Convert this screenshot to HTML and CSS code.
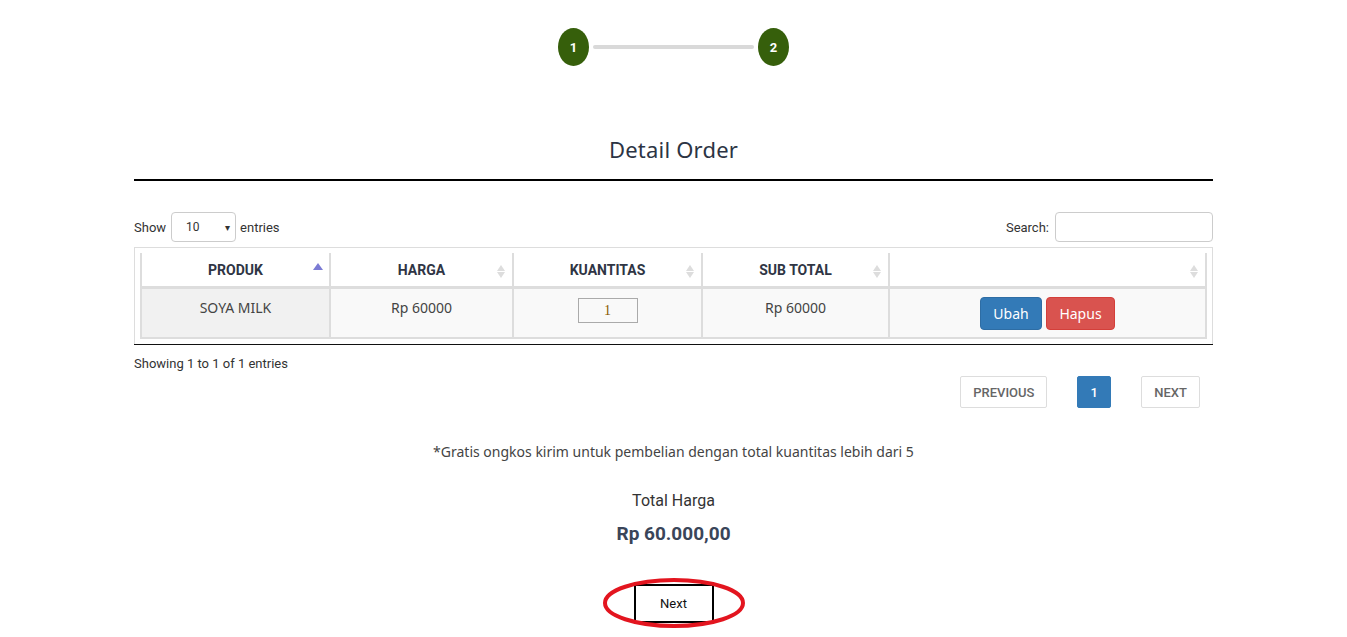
FILE: index.html
```html
<!DOCTYPE html>
<html>
<head>
<meta charset="utf-8">
<link rel="stylesheet" href="styles.css">
</head>
<body>
<div class="page">
  <div class="stepper">
    <div class="step">1</div>
    <div class="step-line"></div>
    <div class="step">2</div>
  </div>

  <h2 class="title">Detail Order</h2>
  <div class="rule"></div>

  <div class="dt-top">
    <label class="dt-len">Show
      <span class="select"><span>10</span><span class="caret">&#9662;</span></span>
      entries</label>
    <label class="dt-search">Search: <span class="search-input"></span></label>
  </div>

  <div class="table-wrap">
    <table class="dt">
      <thead>
        <tr>
          <th class="c1">PRODUK<span class="sort asc"></span></th>
          <th class="c2">HARGA<span class="sort both"></span></th>
          <th class="c3">KUANTITAS<span class="sort both"></span></th>
          <th class="c4">SUB TOTAL<span class="sort both"></span></th>
          <th class="c5"><span class="sort both"></span></th>
        </tr>
      </thead>
      <tbody>
        <tr>
          <td class="sorted">SOYA MILK</td>
          <td>Rp 60000</td>
          <td><span class="qty">1</span></td>
          <td>Rp 60000</td>
          <td class="actions"><span class="btn blue">Ubah</span><span class="btn red">Hapus</span></td>
        </tr>
      </tbody>
    </table>
  </div>
  <div class="rule thin"></div>

  <div class="dt-info">Showing 1 to 1 of 1 entries</div>
  <div class="pager">
    <span class="pg prev">PREVIOUS</span>
    <span class="pg active">1</span>
    <span class="pg">NEXT</span>
  </div>

  <p class="note">*Gratis ongkos kirim untuk pembelian dengan total kuantitas lebih dari 5</p>
  <p class="total-label">Total Harga</p>
  <p class="total">Rp 60.000,00</p>

  <div class="next-wrap">
    <span class="next-btn">Next</span>
    <svg class="circle-mark" width="146" height="54" viewBox="0 0 146 54"><ellipse cx="73" cy="27" rx="69" ry="23" fill="none" stroke="#e3151f" stroke-width="4"/></svg>
  </div>
</div>
</body>
</html>
```

FILE: styles.css
```css
* { box-sizing: border-box; }
body { margin: 0; background: #fff; font-family: Roboto, "Liberation Sans", Arial, sans-serif; color: #333; }
.page { width: 1079px; margin: 0 auto; }

.stepper { display: flex; align-items: center; justify-content: center; padding-top: 28px; height: 66px; }
.step { width: 31px; height: 38px; border-radius: 50%; background: #365f0b; color: #fff; font: bold 13px Roboto, sans-serif; display: flex; align-items: center; justify-content: center; }
.step-line { width: 161px; height: 4px; margin: 0 4px; border-radius: 2px; background: #d9d9d9; }

.title { margin: 67px 0 0; text-align: center; font: 400 22px "Noto Sans", sans-serif; color: #2c3444; letter-spacing: 0.2px; height: 32px; line-height: 32px; }
.rule { height: 2px; background: #000; margin-top: 14px; }
.rule.thin { height: 1px; margin-top: 0; background: #111; }

.dt-top { display: flex; justify-content: space-between; align-items: center; margin-top: 31px; height: 30px; font-size: 13px; color: #333; }
.dt-len { display: flex; align-items: center; gap: 4px; }
.select { display: inline-flex; align-items: center; justify-content: space-between; width: 65px; height: 30px; border: 1px solid #ccc; border-radius: 4px; padding: 0 5px 0 14px; font-size: 12px; margin-left: 1px; }
.caret { font-size: 10px; }
.dt-search { display: flex; align-items: center; gap: 6px; }
.search-input { width: 158px; height: 30px; border: 1px solid #ccc; border-radius: 4px; }

.table-wrap { margin-top: 5px; border: 1px solid #ddd; border-bottom: none; padding: 5px 5px 5px; }
.dt { width: 100%; border-collapse: separate; border-spacing: 0; table-layout: fixed; }
.dt th { position: relative; height: 36px; font: bold 14px Roboto, sans-serif; color: #2f3544; text-align: center; background: #fff; border-left: 2px solid #ddd; border-bottom: 3px solid #ddd; padding: 0 18px; }
.dt th.c1 { width: 189px; }
.dt th.c2 { width: 183px; }
.dt th.c3 { width: 189px; }
.dt th.c4 { width: 187px; }
.dt th.c5 { border-right: 2px solid #ddd; }
.dt td { height: 50px; vertical-align: top; text-align: center; padding-top: 9px; background: #f9f9f9; border-left: 2px solid #ddd; border-bottom: 2px solid #ddd; font: 14px "Noto Sans", sans-serif; color: #444; }
.dt td:last-child { border-right: 2px solid #ddd; }
.dt td.sorted { background: #f1f1f1; }
.sort { position: absolute; right: 7px; top: 12px; width: 8px; height: 14px; }
.sort.both::before, .sort.both::after, .sort.asc::before { content: ""; position: absolute; left: 0; border-left: 4px solid transparent; border-right: 4px solid transparent; }
.sort.both::before { top: 0; border-bottom: 6px solid #ddd; }
.sort.both::after { top: 7px; border-top: 6px solid #ddd; }
.sort.asc::before { top: -2px; border-bottom: 7px solid #7b7bd4; left: -1px; border-left-width: 5px; border-right-width: 5px; }
.qty { display: inline-block; width: 60px; height: 25px; border: 1px solid #aaa; font: 14px "Liberation Serif", serif; color: #8a5a00; line-height: 23px; margin-top: 0; }
.dt td.actions { padding-top: 8px; }
.btn { display: inline-flex; align-items: center; justify-content: center; height: 33px; border-radius: 4px; color: #fff; font: 14px "Noto Sans", sans-serif; margin: 0 2px; border: 1px solid; }
.btn.blue { background: #337ab7; border-color: #2e6da4; width: 62px; }
.btn.red { background: #d9534f; border-color: #d43f3a; width: 69px; }

.dt-info { margin-top: 11px; font: 13px Roboto, sans-serif; color: #333; }
.pager { display: flex; justify-content: flex-end; margin-top: 5px; padding-right: 13px; }
.pg { display: inline-flex; align-items: center; justify-content: center; height: 32px; border: 1px solid #ddd; border-radius: 2px; padding: 0 12px; font: 500 13px Roboto, sans-serif; color: #666; margin-left: 30px; }
.pg.active { background: #337ab7; border-color: #337ab7; color: #fff; width: 34px; padding: 0; }
.pg.prev { margin-left: 0; width: 87px; padding: 0; }

.note { margin: 34px 0 0; text-align: center; font: 14px "Noto Sans", sans-serif; color: #444; }
.total-label { margin: 30px 0 0; text-align: center; font: 16px Roboto, sans-serif; color: #333; }
.total { margin: 12px 0 0; text-align: center; font: bold 19px Roboto, sans-serif; color: #3a4559; }

.next-wrap { position: relative; width: 146px; margin: 31px auto 0; height: 54px; display: flex; justify-content: center; align-items: center; }
.next-btn { display: inline-flex; align-items: center; justify-content: center; width: 80px; height: 39px; border: 2px solid #000; font: 13px Roboto, sans-serif; color: #111; background: #fff; }
.circle-mark { position: absolute; left: 0; top: 0; pointer-events: none; }
```
